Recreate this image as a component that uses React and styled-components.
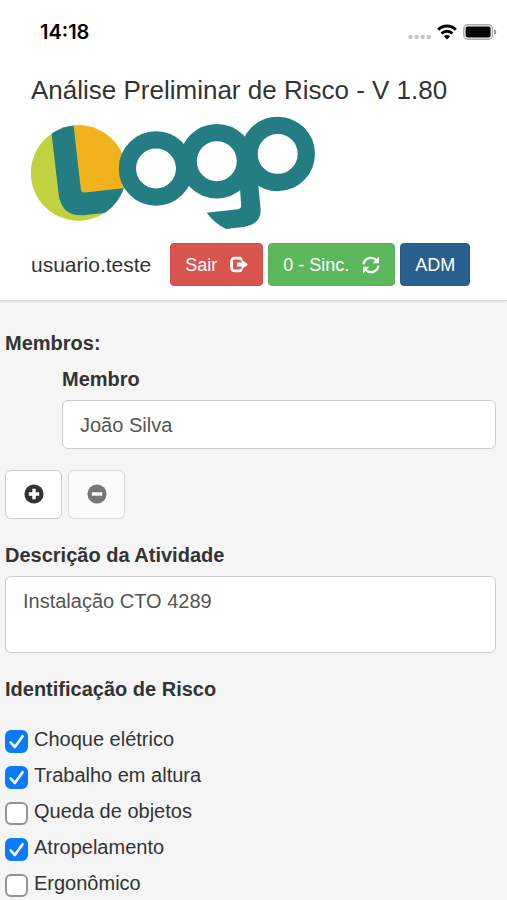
import { useState } from "react";
import styled, { createGlobalStyle } from "styled-components";

const GlobalStyle = createGlobalStyle`
  * {
    box-sizing: border-box;
  }
  html {
    scrollbar-width: none;
  }
  body {
    margin: 0;
    background: #f5f5f5;
    color: #333;
    font-family: "Liberation Sans", Arial, sans-serif;
    font-size: 20px;
    line-height: 28px;
  }
  button,
  input,
  textarea {
    font: inherit;
  }
`;

const Header = styled.header`
  background: #fff;
  padding-bottom: 14px;
  border-bottom: 1px solid #d8d8d8;
  box-shadow: 0 1px 2px rgba(0, 0, 0, 0.1);
`;

const StatusBar = styled.div`
  display: flex;
  align-items: center;
  justify-content: space-between;
  height: 64px;
  padding: 0 10px 0 40px;
  color: #000;
`;

const Clock = styled.time`
  font-family: Inter, sans-serif;
  font-size: 20px;
  font-weight: 600;
`;

const StatusIcons = styled.div`
  display: flex;
  align-items: center;
  gap: 6px;

  svg {
    display: block;
  }
`;

const HeaderContent = styled.div`
  padding: 12px 31px 0;
`;

const Title = styled.h1`
  margin: 0;
  font-size: 26px;
  font-weight: 400;
  line-height: 28px;
  white-space: nowrap;
`;

const LogoImage = styled.svg`
  display: block;
  width: 285px;
  height: 115px;
  margin: 11px 0 13px;
`;

const UserRow = styled.div`
  display: flex;
  align-items: center;
  gap: 5px;
`;

const UserName = styled.span`
  margin-right: 14px;
  font-size: 21px;
`;

const colors = {
  danger: { background: "#d9534f", border: "#d64b47" },
  success: { background: "#5cb85c", border: "#55b355" },
  primary: { background: "#286090", border: "#255a87" },
};

const Button = styled.button`
  display: flex;
  align-items: center;
  gap: 13px;
  height: 43px;
  padding: 0 14px;
  border: 1px solid ${(props) => colors[props.$kind].border};
  border-radius: 4px;
  background: ${(props) => colors[props.$kind].background};
  color: #fff;
  font-size: 18px;
  white-space: nowrap;
`;

const Form = styled.form`
  padding: 28px 11px 0 5px;
`;

const Label = styled.label`
  display: block;
  font-weight: 700;
`;

const SectionTitle = styled.h2`
  margin: 0;
  font-size: 20px;
  font-weight: 700;
  line-height: 28px;
`;

const Member = styled.div`
  padding: 8px 0 0 57px;
`;

const TextInput = styled.input`
  display: block;
  width: 100%;
  height: 49px;
  margin-top: 7px;
  padding: 2px 17px 0;
  border: 1px solid #ccc;
  border-radius: 6px;
  background: #fff;
  color: #555;
`;

const TextArea = styled.textarea`
  display: block;
  width: 100%;
  height: 77px;
  margin: 7px 0 22px;
  padding: 10px 17px;
  border: 1px solid #ccc;
  border-radius: 6px;
  background: #fff;
  color: #555;
  resize: none;
`;

const MemberActions = styled.div`
  display: flex;
  gap: 6px;
  margin: 21px 0 22px;
`;

const IconButton = styled.button`
  display: flex;
  align-items: center;
  justify-content: center;
  width: 57px;
  height: 49px;
  padding: 0 0 2px;
  border: 1px solid #ccc;
  border-radius: 6px;
  background: #fff;
  color: #333;

  &:disabled {
    opacity: 0.65;
  }
`;

const RiskList = styled.ul`
  margin: 18px 0 0;
  padding: 0;
  list-style: none;
`;

const RiskItem = styled.label`
  display: flex;
  align-items: center;
  gap: 6px;
  height: 36px;
`;

const CheckWrap = styled.span`
  display: grid;
  width: 23px;
  height: 23px;
  margin-top: 4px;

  > * {
    grid-area: 1 / 1;
  }
`;

const Checkbox = styled.input`
  appearance: none;
  width: 23px;
  height: 23px;
  margin: 0;
  border: 2px solid #949494;
  border-radius: 6px;
  background: #fff;

  &:checked {
    border-color: #0a7aff;
    background: #0a7aff;
  }
`;

const CheckMark = styled.svg`
  pointer-events: none;
  visibility: ${(props) => (props.$checked ? "visible" : "hidden")};
`;

function CellularDots() {
  return (
    <svg width="24" height="16" viewBox="0 0 24 16" fill="#c4c4c4">
      <circle cx="3.5" cy="13" r="2.2" />
      <circle cx="9.6" cy="13" r="2.2" />
      <circle cx="15.7" cy="13" r="2.2" />
      <circle cx="21.8" cy="13" r="2.2" />
    </svg>
  );
}

function WifiIcon() {
  return (
    <svg width="20" height="16" viewBox="0 0 20 16">
      <g fill="none" stroke="#000" strokeWidth="2.9">
        <path d="M1.2 5.7A12.4 12.4 0 0 1 18.8 5.7" />
        <path d="M4.6 9.5A7.6 7.6 0 0 1 15.4 9.5" />
      </g>
      <path d="M10 15.4L6.9 12.3A4.4 4.4 0 0 1 13.1 12.3Z" />
    </svg>
  );
}

function BatteryIcon() {
  return (
    <svg width="34" height="16" viewBox="0 0 34 16">
      <rect x="0.8" y="0.8" width="28.6" height="14.4" rx="4" fill="none" stroke="#aaa" strokeWidth="1.4" />
      <rect x="2.6" y="2.6" width="25" height="10.8" rx="1.8" />
      <path d="M31 5.2Q33.4 6 33.4 8T31 10.8Z" fill="#999" />
    </svg>
  );
}

function Logo() {
  return (
    <LogoImage viewBox="31 115 285 115" role="img" aria-label="Logo">
      <clipPath id="badge">
        <circle cx="78.5" cy="173" r="47.7" />
      </clipPath>
      <g clipPath="url(#badge)">
        <rect x="30" y="120" width="100" height="105" fill="#c1d13f" />
        <path d="M73 120L80.8 189Q81.2 193 85 192.4L130 187.4V120Z" fill="#f1b31c" />
        <path
          d="M50 120L58.6 194Q61.5 217 84 215.2L104 213L130 212V187.4L85 192.4Q81.2 193 80.8 189L73 120Z"
          fill="#247d82"
        />
      </g>
      <g fill="none" stroke="#247d82" strokeWidth="17.3">
        <circle cx="156" cy="168.5" r="28.6" />
        <circle cx="216.8" cy="161.2" r="28.6" />
        <circle cx="277.7" cy="153.9" r="28.6" />
      </g>
      <path
        d="M237.6 158L241.2 205Q241.3 208.7 238 209.2L206.7 212.8Q214 223 226 229L243.5 226.9Q261.5 224 260.6 209L258.2 184L256 158L247 142Z"
        fill="#247d82"
      />
    </LogoImage>
  );
}

function LogOutIcon() {
  return (
    <svg width="18" height="17" viewBox="0 0 18 17">
      <path
        d="M11 4.2V3.4Q11 2.1 9.7 2.1H4.6A3 3 0 0 0 1.6 5.1V11.9A3 3 0 0 0 4.6 14.9H9.7Q11 14.9 11 13.6V12.8"
        fill="none"
        stroke="#fff"
        strokeWidth="2.7"
      />
      <path d="M7 6.6H11.6V3.6L18 8.5L11.6 13.4V10.4H7Z" fill="#fff" />
    </svg>
  );
}

function RefreshIcon() {
  return (
    <svg width="18" height="18" viewBox="0 0 18 18">
      <g fill="none" stroke="#fff" strokeWidth="2.3">
        <path d="M1.6 8.4A7.4 7.2 0 0 1 14.6 4.4" />
        <path d="M16.4 9.6A7.4 7.2 0 0 1 3.4 13.6" />
      </g>
      <path d="M17 0.6V7.3H10.6ZM1 17.4V10.7H7.4Z" fill="#fff" />
    </svg>
  );
}

function SignIcon({ plus }) {
  return (
    <svg width="20" height="20" viewBox="0 0 20 20">
      <circle cx="10" cy="10" r="9.6" fill="currentColor" />
      <path
        d={plus ? "M4.8 10H15.2M10 4.8V15.2" : "M4.8 10H15.2"}
        stroke="#fff"
        strokeWidth="3.4"
      />
    </svg>
  );
}

function Risk({ name, defaultChecked }) {
  const [checked, setChecked] = useState(defaultChecked);
  return (
    <li>
      <RiskItem>
        <CheckWrap>
          <Checkbox
            type="checkbox"
            checked={checked}
            onChange={(e) => setChecked(e.target.checked)}
          />
          <CheckMark $checked={checked} width="23" height="23" viewBox="0 0 23 23">
            <path
              d="M5.6 12.4L9.9 17L17.6 6.2"
              fill="none"
              stroke="#fff"
              strokeWidth="2.6"
              strokeLinecap="round"
              strokeLinejoin="round"
            />
          </CheckMark>
        </CheckWrap>
        {name}
      </RiskItem>
    </li>
  );
}

const risks = [
  { name: "Choque elétrico", checked: true },
  { name: "Trabalho em altura", checked: true },
  { name: "Queda de objetos", checked: false },
  { name: "Atropelamento", checked: true },
  { name: "Ergonômico", checked: false },
];

function App() {
  return (
    <>
      <GlobalStyle />
      <Header>
        <StatusBar>
          <Clock>14:18</Clock>
          <StatusIcons>
            <CellularDots />
            <WifiIcon />
            <BatteryIcon />
          </StatusIcons>
        </StatusBar>
        <HeaderContent>
          <Title>Análise Preliminar de Risco - V 1.80</Title>
          <Logo />
          <UserRow>
            <UserName>usuario.teste</UserName>
            <Button type="button" $kind="danger">
              Sair
              <LogOutIcon />
            </Button>
            <Button type="button" $kind="success">
              0 - Sinc.
              <RefreshIcon />
            </Button>
            <Button type="button" $kind="primary">
              ADM
            </Button>
          </UserRow>
        </HeaderContent>
      </Header>
      <Form>
        <SectionTitle>Membros:</SectionTitle>
        <Member>
          <Label htmlFor="member">Membro</Label>
          <TextInput id="member" type="text" defaultValue="João Silva" />
        </Member>
        <MemberActions>
          <IconButton type="button" aria-label="Adicionar membro">
            <SignIcon plus />
          </IconButton>
          <IconButton type="button" aria-label="Remover membro" disabled>
            <SignIcon />
          </IconButton>
        </MemberActions>
        <Label htmlFor="activity">Descrição da Atividade</Label>
        <TextArea id="activity" defaultValue="Instalação CTO 4289" />
        <SectionTitle>Identificação de Risco</SectionTitle>
        <RiskList>
          {risks.map((risk) => (
            <Risk key={risk.name} name={risk.name} defaultChecked={risk.checked} />
          ))}
        </RiskList>
      </Form>
    </>
  );
}

export default App;
